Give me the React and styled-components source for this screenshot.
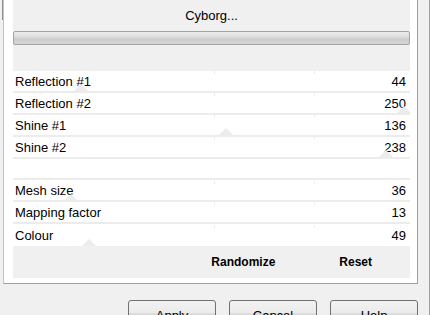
import React from "react";
import styled, { createGlobalStyle } from "styled-components";

const Global = createGlobalStyle`
  html, body { margin: 0; padding: 0; background: #f0f0f0; }
  body { font-family: "Liberation Sans", Arial, sans-serif; color: #000; }
`;

const Window = styled.div`
  position: relative;
  width: 429px;
  height: 315px;
  overflow: hidden;
  background: #f0f0f0;
  border-right: 1px solid #a0a0a0;
  box-shadow: 1px 0 0 #fff;
`;

const Panel = styled.div`
  position: relative;
  margin-left: 3px;
  width: 415px;
  height: 284px;
  box-sizing: border-box;
  background: #fff;
  border: 1px solid #a0a0a0;
  border-top: none;
  border-left-color: #c4c4c4;
  padding: 0 7px 0 9px;
  display: flex;
  flex-direction: column;
`;

const Header = styled.div`
  height: 71px;
  background: #f0f0f0;
  display: flex;
  flex-direction: column;
  align-items: stretch;
`;

const Title = styled.div`
  font-size: 13px;
  line-height: 15px;
  text-align: center;
  padding-top: 8px;
`;

const Progress = styled.div`
  margin-top: 8px;
  height: 14px;
  box-sizing: border-box;
  border: 1px solid #a4a4a4;
  border-radius: 2px;
  background: linear-gradient(#ececec 0%, #e2e2e2 30%, #cdcdcd 60%, #d6d6d6 100%);
`;

const Group = styled.div`
  display: flex;
  flex-direction: column;
  border-top: ${(p) => (p.$top ? "2px solid #ececec" : "none")};
  margin-top: ${(p) => p.$gap || 0}px;
`;

const Row = styled.div`
  height: 22px;
  box-sizing: border-box;
  border-bottom: ${(p) => (p.$last ? "none" : "2px solid #ececec")};
  display: flex;
  align-items: center;
  justify-content: space-between;
  padding: 0 4px 0 2px;
  font-size: 13px;
`;

const Footer = styled.div`
  height: 32px;
  background: #f0f0f0;
  display: flex;
  align-items: center;
  justify-content: flex-end;
  padding-right: 38px;
  gap: 64px;
`;

const Action = styled.span`
  font-size: 12px;
  font-weight: bold;
`;

const Buttons = styled.div`
  display: flex;
  justify-content: flex-end;
  gap: 13px;
  padding-right: 11px;
  margin-top: 16px;
`;

const Button = styled.div`
  width: 88px;
  height: 26px;
  box-sizing: border-box;
  border: 1px solid #707070;
  border-radius: 3px;
  background: linear-gradient(#f2f2f2 0%, #ebebeb 50%, #dddddd 50%, #cfcfcf 100%);
  font-size: 13px;
  text-align: center;
  padding-top: 7px;
`;

const Ghost = styled.div`
  position: absolute;
  width: 0;
  height: 0;
  border-left: 7px solid transparent;
  border-right: 7px solid transparent;
  border-bottom: 7px solid #ececec;
  pointer-events: none;
`;

const Tick = styled.div`
  position: absolute;
  width: 1px;
  height: 3px;
  background: #ececec;
`;

const ScrollMark = styled.div`
  position: absolute;
  left: 2px;
  top: 0;
  width: 2px;
  height: 20px;
  background: #909090;
`;

const group1 = [
  ["Reflection #1", 44],
  ["Reflection #2", 250],
  ["Shine #1", 136],
  ["Shine #2", 238],
];
const group2 = [
  ["Mesh size", 36],
  ["Mapping factor", 13],
  ["Colour", 49],
];

const ghosts = [
  [73, 84],
  [218, 128],
  [396, 106],
  [378, 150],
  [81, 239],
  [63, 194],
];
const tickYs = [71, 93, 115, 137, 181, 203, 225];

export default function App() {
  return (
    <Window>
      <Global />
      <ScrollMark />
      <Panel>
        <Header>
          <Title>Cyborg...</Title>
          <Progress />
        </Header>
        <Group>
          {group1.map(([l, v]) => (
            <Row key={l}>
              <span>{l}</span>
              <span>{v}</span>
            </Row>
          ))}
        </Group>
        <Group $top $gap={19}>
          {group2.map(([l, v], i) => (
            <Row key={l} $last={i === group2.length - 1}>
              <span>{l}</span>
              <span>{v}</span>
            </Row>
          ))}
        </Group>
        <Footer>
          <Action>Randomize</Action>
          <Action>Reset</Action>
        </Footer>
        {ghosts.map(([x, y]) => (
          <Ghost key={`${x}-${y}`} style={{ left: x - 3, top: y }} />
        ))}
        {tickYs.flatMap((y) => [
          <Tick key={`a${y}`} style={{ left: 210, top: y }} />,
          <Tick key={`b${y}`} style={{ left: 310, top: y }} />,
        ])}
      </Panel>
      <Buttons>
        <Button>Apply</Button>
        <Button>Cancel</Button>
        <Button>Help</Button>
      </Buttons>
    </Window>
  );
}
